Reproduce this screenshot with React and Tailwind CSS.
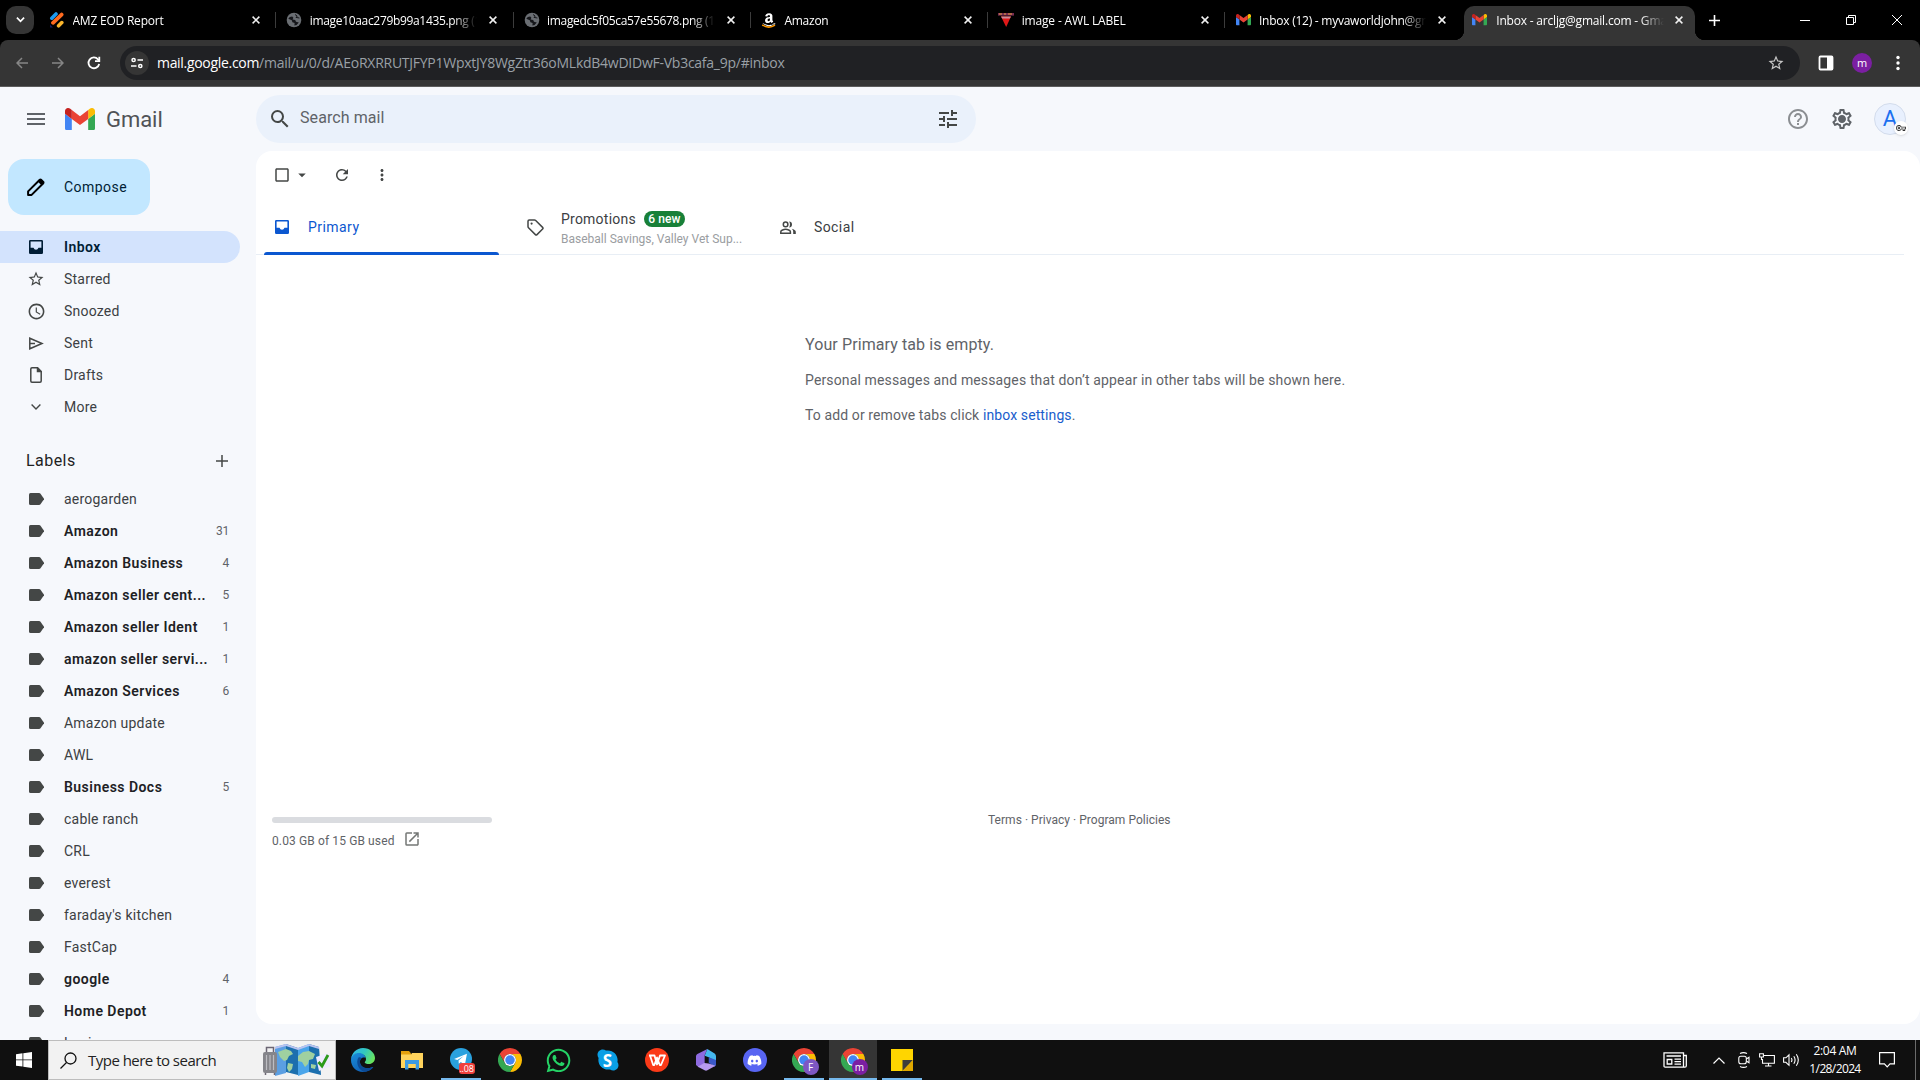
import React from "react";
import {
  MdMenu, MdSearch, MdTune, MdHelpOutline, MdOutlineSettings, MdArrowDropDown, MdRefresh,
  MdMoreVert, MdStarBorder, MdSchedule, MdOpenInNew, MdOutlineVpnKey, MdCheckBoxOutlineBlank,
} from "react-icons/md";
import { FaAmazon, FaWhatsapp, FaSkype, FaDiscord } from "react-icons/fa";

const gmailFont = "font-[Roboto,sans-serif]";
const uiFont = "font-['Open_Sans','Noto_Sans',sans-serif]";

/* ---------- favicons and logos ---------- */

function GmailLogo({ className }) {
  return (
    <svg viewBox="52 42 88 66" className={className}>
      <path fill="#4285f4" d="M58 108h14V74L52 59v43c0 3.32 2.69 6 6 6" />
      <path fill="#34a853" d="M120 108h14c3.32 0 6-2.69 6-6V59l-20 15" />
      <path fill="#fbbc04" d="M120 48v26l20-15v-8c0-7.42-8.47-11.65-14.4-7.2" />
      <path fill="#ea4335" d="M72 74V48l24 18 24-18v26L96 92" />
      <path fill="#c5221f" d="M52 51v8l20 15V48l-5.6-4.2c-5.94-4.45-14.4-.22-14.4 7.2" />
    </svg>
  );
}

function StripesIcon() {
  return (
    <svg viewBox="0 0 16 16" className="size-4" strokeLinecap="round" strokeWidth="3.6" fill="none">
      <path d="M1 12.5v3h3z" fill="#141a5e" />
      <path d="M2.8 6.2 7 2" stroke="#1d9bf0" />
      <path d="M4 10.8 12.6 2.6" stroke="#ff6a1f" strokeWidth="3.8" />
      <path d="M9.6 13.8 12.8 10.6" stroke="#fbb62c" />
    </svg>
  );
}

function GlobeIcon() {
  return (
    <svg viewBox="0 0 16 16" className="size-4">
      <circle cx="8" cy="8" r="7.300" fill="#6a6e73" />
      <path d="M2.300 6.800 3.800 5l2.400-.4 1.200 1.200-.8 1.600 2.600.6.800 1.800 2.800.6-2.200 2.600-2.200.4.2-2.400-2.200-.8-.6-2z" fill="#15161a" />
      <path d="M9 2.500l2.200 1.600-1.200 1.300 3.400.6" stroke="#15161a" strokeWidth="1" fill="none" />
    </svg>
  );
}

function AmazonIcon() {
  return (
    <svg viewBox="0 0 448 512" className="size-[17px]">
      <FaAmazon size={448} color="#fff" y="10" />
      <path d="M20 385c120 85 270 85 385 10" stroke="#f90" strokeWidth="48" fill="none" />
    </svg>
  );
}

function AwlIcon() {
  return (
    <svg viewBox="0 0 16 16" className="size-4">
      <rect x="0" y="1" width="16" height="2.6" fill="#7a2d52" />
      <path d="M1 2h3M6 2h2M10 2h4" stroke="#e8a23c" strokeWidth="1" />
      <path d="M3 4.500h10L8.200 15z" fill="#e01818" />
      <path d="M3 4.500h10l-1.200 2H4.200z" fill="#c98b9a" />
    </svg>
  );
}

/* ---------- browser chrome ---------- */

const tabs = [
  { icon: <StripesIcon />, title: "AMZ EOD Report", track: "tracking-[-0.22px]" },
  { icon: <GlobeIcon />, title: "image10aac279b99a1435.png (1920×1080)", track: "tracking-[-0.33px]" },
  { icon: <GlobeIcon />, title: "imagedc5f05ca57e55678.png (1920×1080)", track: "tracking-[-0.33px]" },
  { icon: <AmazonIcon />, title: "Amazon", track: "tracking-[-0.25px]" },
  { icon: <AwlIcon />, title: "image - AWL LABEL", track: "tracking-[-0.16px]" },
  { icon: <GmailLogo className="w-[15px]" />, title: "Inbox (12) - myvaworldjohn@gmail.com", track: "tracking-[-0.25px]" },
];

function CloseX() {
  return (
    <svg viewBox="0 0 8 8" className="size-2 shrink-0" stroke="#f1f1f1" strokeWidth="1.500">
      <path d="M.6.6l6.800 6.800M7.400.6.6 7.400" />
    </svg>
  );
}

function TabTitle({ title, track }) {
  return (
    <span className={`ml-[7.500px] w-[167.500px] shrink-0 overflow-hidden whitespace-nowrap pt-[2px] text-[12px] text-white [mask-image:linear-gradient(to_right,#000_86%,transparent)] ${track}`}>
      {title}
    </span>
  );
}

function TabStrip() {
  return (
    <div className="flex h-10 bg-black">
      <div className="ml-[6px] mt-[6px] flex h-7 w-7 items-center justify-center rounded-[10px] bg-[#353535]">
        <svg viewBox="0 0 10 6" className="w-[9px]" fill="none" stroke="#fff" strokeWidth="1.900"><path d="M1 .8l4 4 4-4" /></svg>
      </div>
      <div className="ml-1 flex">
        {tabs.map((t, i) => (
          <div key={t.title} className="flex h-10 w-[237.3px] items-center">
            <span className={`h-4 w-px ${i ? "bg-[#3c3c3c]" : "bg-transparent"}`} />
            <span className="ml-[10px] flex w-4 shrink-0 justify-center">{t.icon}</span>
            <TabTitle title={t.title} track={t.track} />
            <span className="ml-[12px]"><CloseX /></span>
          </div>
        ))}
      </div>
      <div className="relative ml-[2px] mt-[6px] flex h-[34px] w-[231px] items-center rounded-t-[10px] bg-[#353535] pb-[6px] pl-2">
        <span className="absolute -left-[10px] bottom-0 size-[10px] bg-[radial-gradient(circle_at_0_0,#000_10px,#353535_10.500px)]" />
        <span className="absolute -right-[10px] bottom-0 size-[10px] bg-[radial-gradient(circle_at_100%_0,#000_10px,#353535_10.500px)]" />
        <GmailLogo className="mr-[2px] w-[15px] shrink-0" />
        <TabTitle title="Inbox - arcljg@gmail.com - Gmail" track="tracking-[-0.2px]" />
        <span className="ml-[11px]"><CloseX /></span>
      </div>
      <svg viewBox="0 0 11 11" className="ml-[14px] mt-[15px] size-[11px]" stroke="#fff" strokeWidth="1.600"><path d="M5.500 0v11M0 5.500h11" /></svg>
      <div className="ml-auto mr-[18px] flex h-10 items-center gap-9">
        <svg viewBox="0 0 10 10" className="size-[10px]" stroke="#fff" fill="none"><path d="M0 5.500h10" /></svg>
        <svg viewBox="0 0 10 10" className="size-[10px]" stroke="#fff" fill="none"><path d="M.5 2.500h7v7h-7zM2.500 2.500v-2h7v7h-2" /></svg>
        <svg viewBox="0 0 10 10" className="size-[10px]" stroke="#fff" fill="none"><path d="M0 0l10 10M10 0 0 10" /></svg>
      </div>
    </div>
  );
}

function Toolbar() {
  return (
    <div className="bg-black">
      <div className="flex h-[47px] items-center rounded-t-lg border-b border-[#5c5c5c] bg-[#353535] pl-4">
        <svg viewBox="0 0 12 12" className="size-3" stroke="#868686" strokeWidth="1.500" fill="none"><path d="M12 6H1M6 1 1 6l5 5" /></svg>
        <svg viewBox="0 0 12 12" className="ml-6 size-3" stroke="#868686" strokeWidth="1.500" fill="none"><path d="M0 6h11M6 1l5 5-5 5" /></svg>
        <svg viewBox="0 0 14 14" className="ml-[23px] size-[14px]" stroke="#fff" strokeWidth="1.800" fill="none"><path d="M12.200 8A5.400 5.400 0 1 1 11 3.300L12.300 4.600" /><path d="M12.300.8v4.400H8" /></svg>
        <div className="ml-[19px] flex h-[34px] w-[1680px] items-center rounded-full bg-[#202124] pl-[5px] pr-[15px]">
          <span className="flex size-6 shrink-0 items-center justify-center rounded-full bg-[#353535]">
            <svg viewBox="0 0 12 12" className="size-3" stroke="#fff" strokeWidth="1.500" fill="none"><circle cx="2.600" cy="3" r="1.600" /><path d="M6.500 3H12M0 9h5.500" /><circle cx="9.300" cy="9" r="1.600" /></svg>
          </span>
          <span className="ml-2 whitespace-nowrap text-[14px] leading-5 tracking-[-0.31px] text-white">mail.google.com</span>
          <span className="whitespace-nowrap text-[14px] leading-5 tracking-[-0.255px] text-[#9aa0a6]">/mail/u/0/d/AEoRXRRUTJFYP1WpxtJY8WgZtr36oMLkdB4wDIDwF-Vb3cafa_9p/#inbox</span>
          <MdStarBorder className="ml-auto size-[18px] text-[#c7c7c7]" />
        </div>
        <svg viewBox="0 0 16 16" className="ml-[18px] size-4"><rect x="1.500" y="1.500" width="13" height="13" rx="1" fill="none" stroke="#fff" strokeWidth="1.800" /><path d="M9 1h5.500v14H9z" fill="#fff" /></svg>
        <span className="ml-[18px] flex size-5 items-center justify-center rounded-full bg-[#7b1fa2] pb-px text-[11px] leading-none text-white">m</span>
        <svg viewBox="0 0 4 16" className="ml-6 h-4 w-1" fill="#fff"><circle cx="2" cy="2.500" r="1.700" /><circle cx="2" cy="8" r="1.700" /><circle cx="2" cy="13.500" r="1.700" /></svg>
      </div>
    </div>
  );
}

/* ---------- Gmail ---------- */

function InboxIcon() {
  return <svg viewBox="0 0 14 14" className="size-[14px]" fill="currentColor" fillRule="evenodd"><path d="M1.300 0h11.400Q14 0 14 1.300v11.400q0 1.300-1.300 1.300H1.300Q0 14 0 12.700V1.300Q0 0 1.300 0zM1.600 1.600v6.200H4.500Q5.200 9.800 7 9.800t2.500-2h2.900V1.600z" /></svg>;
}
function SendIcon() {
  return <svg viewBox="0 0 15 13" className="w-[15px]" fill="none" stroke="#444746" strokeWidth="1.500"><path d="M.8 1.200 13 6.500.8 11.800zM1 6.500h5" /></svg>;
}
function DraftIcon() {
  return <svg viewBox="0 0 12 16" className="w-3" fill="none" stroke="#444746" strokeWidth="1.500"><path d="M.8 2q0-1.200 1.200-1.200h5.500l3.700 3.700V14q0 1.200-1.200 1.200H2q-1.200 0-1.200-1.200z" /><path d="M7.500 1v3.500h3.500z" fill="#444746" /></svg>;
}
function LabelIcon() {
  return <svg viewBox="0 0 15 12" className="w-[15px]" fill="#444746"><path d="M1.500 0H10q1 0 1.500.7L15.200 6l-3.700 5.300q-.5.700-1.500.7H1.500Q0 12 0 10.500v-9Q0 0 1.500 0z" /></svg>;
}
function PencilIcon() {
  return (
    <svg viewBox="0 0 18 18" className="size-[18px]" fill="none" stroke="#000" strokeWidth="2">
      <path d="M1.100 13.400 12.800 1.700l3.500 3.500L4.600 16.900H1.100z" strokeLinejoin="round" />
      <path d="M12.700.9q1-1 2 0L17 3.300q1 1 0 2L14.700 7.500 10.500 3.200z" fill="#000" stroke="none" />
    </svg>
  );
}
function PeopleIcon() {
  return (
    <svg viewBox="0 0 16 13" className="w-4" fill="none" stroke="#444746" strokeWidth="1.500">
      <circle cx="5.600" cy="3.400" r="2.300" />
      <path d="M.8 12.200v-1.400c0-1.600 3-2.500 4.800-2.500s4.800.9 4.800 2.500v1.400z" />
      <path d="M9 .4a3 3 0 0 1 0 6c1.300-1.500 1.300-4.500 0-6zM11.800 7.800c2 .5 4 1.500 4 3V13h-2.600v-2.200c0-1.200-.5-2.200-1.400-3z" fill="#444746" stroke="none" />
    </svg>
  );
}
function GearIcon() {
  return (
    <svg viewBox="0 0 24 24" className="ml-5 size-6 text-[#5f6368]">
      <MdOutlineSettings size={24} />
      <circle cx="12" cy="12" r="3.200" fill="currentColor" />
    </svg>
  );
}

const folders = [
  { name: "Starred", icon: <MdStarBorder className="size-[18px]" /> },
  { name: "Snoozed", icon: <MdSchedule className="size-[19px]" /> },
  { name: "Sent", icon: <SendIcon /> },
  { name: "Drafts", icon: <DraftIcon /> },
  { name: "More", icon: <svg viewBox="0 0 10 6" className="w-[10px]" fill="none" stroke="#444746" strokeWidth="1.400"><path d="M.6.6 5 5 9.400.6" /></svg> },
];

const labels = [
  ["aerogarden"], ["Amazon", 31], ["Amazon Business", 4], ["Amazon seller cent...", 5],
  ["Amazon seller Ident", 1], ["amazon seller servi...", 1], ["Amazon Services", 6],
  ["Amazon update"], ["AWL"], ["Business Docs", 5], ["cable ranch"], ["CRL"], ["everest"],
  ["faraday's kitchen"], ["FastCap"], ["google", 4], ["Home Depot", 1], ["Login"],
];

function SideRow({ icon, name, count, bold, active }) {
  return (
    <div className={`flex h-8 w-60 shrink-0 items-center rounded-r-full pr-[11px] ${active ? "bg-[#d3e3fd] text-[#001d35]" : "text-[#202124]"}`}>
      <span className={`flex w-[72px] shrink-0 justify-center ${active ? "" : "text-[#444746]"}`}>{icon}</span>
      <span className={`-ml-2 whitespace-nowrap text-[14px] leading-5 ${bold ? "font-semibold tracking-[0.46px]" : "tracking-[0.22px] text-[#3c4043]"}`}>{name}</span>
      {count && <span className="ml-auto text-[12px] tracking-[-0.3px] text-[#5f6368]">{count}</span>}
    </div>
  );
}

function Sidebar() {
  return (
    <aside className="flex w-64 shrink-0 flex-col overflow-hidden">
      <div className="flex h-16 shrink-0 items-center pl-6 text-[#5f6368]">
        <MdMenu className="size-6" />
        <GmailLogo className="ml-[17px] w-[30px]" />
        <span className="ml-[11px] text-[22px] tracking-[-0.05px] text-[#505357]">Gmail</span>
      </div>
      <button className="ml-2 mt-2 flex h-14 w-[142px] shrink-0 items-center rounded-2xl bg-[#c2e7ff] pl-[19px] text-[#001d35]">
        <PencilIcon />
        <span className="ml-[19px] text-[14px] font-[450] tracking-[0.45px]">Compose</span>
      </button>
      <nav className="mt-4 flex flex-col">
        <SideRow active bold name="Inbox" icon={<InboxIcon />} />
        {folders.map((f) => <SideRow key={f.name} {...f} />)}
      </nav>
      <div className="mt-[22px] flex h-[32px] w-[230px] shrink-0 items-center justify-between pl-[26px] text-[#1f1f1f]">
        <span className="text-[16px] tracking-[0.45px]">Labels</span>
        <svg viewBox="0 0 12 12" className="mr-[2px] size-3" stroke="#444746" strokeWidth="1.500"><path d="M6 0v12M0 6h12" /></svg>
      </div>
      <div className="mt-[6px] flex flex-col">
        {labels.map(([name, count]) => <SideRow key={name} name={name} count={count} bold={!!count} icon={<LabelIcon />} />)}
      </div>
    </aside>
  );
}

function TopBar() {
  return (
    <header className="flex h-16 shrink-0 items-center pr-[14px]">
      <div className="flex h-12 w-[720px] items-center rounded-full bg-[#eaf1fb] pl-3">
        <MdSearch className="size-6 text-[#444746]" />
        <span className="ml-2 pb-[2px] text-[16px] tracking-[0.08px] text-[#5f6368]">Search mail</span>
        <MdTune className="ml-auto mr-4 size-6 text-[#444746]" />
      </div>
      <MdHelpOutline className="ml-auto size-6 text-[#8b8e92]" />
      <GearIcon />
      <div className="relative ml-5 flex size-8 items-center justify-center rounded-full border border-[#d3dcec] bg-[#e8f0fe]">
        <span className="text-[22px] leading-none text-[#1a6ff0]">A</span>
        <span className="absolute -bottom-px -right-[3px] flex size-[14px] items-center justify-center rounded-full bg-white shadow">
          <MdOutlineVpnKey className="size-[10px] text-[#333]" />
        </span>
      </div>
    </header>
  );
}

function InboxPanel() {
  return (
    <main className="flex h-[873px] shrink-0 flex-col rounded-2xl bg-white">
      <div className="flex h-12 shrink-0 items-center pl-[17px] text-[#444746]">
        <MdCheckBoxOutlineBlank className="size-[18px]" />
        <MdArrowDropDown className="ml-[2px] size-[18px]" />
        <MdRefresh className="ml-[22px] size-[18px]" />
        <MdMoreVert className="ml-[22px] size-[18px]" />
      </div>
      <div className="mr-4 flex h-14 shrink-0 border-b border-[#e8eef5] text-[#3c4043]">
        <div className="relative ml-2 flex h-14 w-[235px] items-center pl-[11px] text-[#0b57d0]">
          <InboxIcon />
          <span className="ml-[19px] text-[14px] font-[450] tracking-[0.45px]">Primary</span>
          <span className="absolute inset-x-0 bottom-0 h-[3px] rounded-t-sm bg-[#0b57d0]" />
        </div>
        <div className="ml-[18px] flex h-14 w-[252px] items-center pl-[10px]">
          <svg viewBox="0 0 17 17" className="size-[17px] shrink-0" fill="none" stroke="#444746" strokeWidth="1.500">
            <path d="M1 2.200Q1 1 2.200 1h5.300q.7 0 1.200.5l6.900 6.900q.8.800 0 1.600l-5.600 5.600q-.8.800-1.600 0L1.500 8.700Q1 8.200 1 7.500z" /><circle cx="4.600" cy="4.600" r="1.100" fill="#444746" stroke="none" />
          </svg>
          <div className="ml-[17px] flex flex-col pt-1">
            <div className="flex items-center">
              <span className="text-[14px] font-[450] leading-5 tracking-[0.23px]">Promotions</span>
              <span className="ml-2 flex h-4 w-[41px] items-center justify-center rounded-lg bg-[#188038] text-[12px] font-medium leading-none tracking-[0.1px] text-white">6 new</span>
            </div>
            <span className="whitespace-nowrap text-[12px] leading-5 text-[#9a9da1]">Baseball Savings, Valley Vet Sup...</span>
          </div>
        </div>
        <div className="flex h-14 items-center pl-[11px]">
          <PeopleIcon />
          <span className="ml-[18px] text-[14px] font-[450] tracking-[0.4px]">Social</span>
        </div>
      </div>
      <div className="ml-[549px] mt-[78px] flex flex-col text-[#5f6368]">
        <p className="text-[16px] leading-6 tracking-[0.1px]">Your Primary tab is empty.</p>
        <p className="mt-[13px] text-[14px] leading-5 tracking-[0.14px]">Personal messages and messages that don’t appear in other tabs will be shown here.</p>
        <p className="mt-[15px] text-[14px] leading-5 tracking-[0.11px]">To add or remove tabs click <span className="text-[#1a5dcc]">inbox settings</span>.</p>
      </div>
      <footer className="mt-[387px] flex text-[12px] leading-[14px] text-[#5f6368]">
        <div className="ml-4 w-[220px]">
          <div className="mt-[5px] h-[6px] rounded-full bg-[#dadce0]" />
          <div className="mt-[7px] flex items-center">
            <span className="pt-1 tracking-[0.12px]">0.03 GB of 15 GB used</span>
            <MdOpenInNew className="ml-[8px] size-[18px] text-[#747775]" />
          </div>
        </div>
        <div className="ml-[496px] mt-[1px] tracking-[0.03px]">Terms · Privacy · Program Policies</div>
      </footer>
    </main>
  );
}

/* ---------- Windows taskbar ---------- */

function ChromeLogo({ className }) {
  return (
    <svg viewBox="0 0 48 48" className={className}>
      <path fill="#ea4335" d="M24 12h20.780A24 24 0 0 0 3.215 12L13.608 30A12 12 0 0 1 24 12" />
      <path fill="#fbbc04" d="M34.390 30 24 48A24 24 0 0 0 44.780 12H24A12 12 0 0 1 34.390 30" />
      <path fill="#34a853" d="M13.608 30 3.215 12A24 24 0 0 0 24 48l10.390-18A12 12 0 0 1 13.608 30" />
      <circle cx="24" cy="24" r="12" fill="#fff" />
      <circle cx="24" cy="24" r="9.500" fill="#4285f4" />
    </svg>
  );
}

function ProfileChrome({ letter, tint }) {
  return (
    <span className="relative block size-6">
      <ChromeLogo className="size-6" />
      <span className={`absolute -bottom-[3px] -right-[3px] flex size-4 items-center justify-center rounded-full text-[10px] leading-none text-white ${tint}`}>{letter}</span>
    </span>
  );
}

function EdgeLogo() {
  return (
    <svg viewBox="0 0 24 24" className="size-6">
      <defs>
        <linearGradient id="edgeTop" x1="0" y1="0.200" x2="1" y2="0.600"><stop offset="0" stopColor="#2fb5ea" /><stop offset=".5" stopColor="#32c8c0" /><stop offset="1" stopColor="#6be55a" /></linearGradient>
        <linearGradient id="edgeLeft" x1="0" y1="0" x2="0.600" y2="1"><stop offset="0" stopColor="#1b8fdb" /><stop offset="1" stopColor="#0f5fb5" /></linearGradient>
      </defs>
      <path fill="url(#edgeLeft)" d="M0 12C0 6.500 4.500 4.500 8 4.500c4 0 6.500 3 6.500 5.500-3-1.500-6 1-5.500 4.500.5 4 5 7 10.500 5.200 1.500-.5 2.500-1 2.800-.6C20.500 22 16.500 24 12 24 5 24 0 18.500 0 12z" />
      <path fill="#0c4a94" d="M7.500 9.500C4.500 14 7 22 13.500 23.900c4-.4 7-2.300 8.700-4.800.2-.4-1-.1-2.700.6-5.500 1.800-10-1.200-10.500-5.200-.2-2 .3-3.400 1.500-4.500-1-.8-2-1-3-.5z" />
      <path fill="url(#edgeTop)" d="M0 11.500C.5 5 5.500 0 12 0c7 0 12 5 12 10 0 3.500-2.800 6-6 6-2.500 0-4.300-.8-4.300-1.600 0-.7 1.300-1.200 1.300-3.200C15 7.500 11.500 5 8 5 4 5 .8 7.500 0 11.500z" />
    </svg>
  );
}

function ExplorerIcon() {
  return (
    <svg viewBox="0 0 22 19" className="w-[22px]">
      <path fill="#e5a00d" d="M0 0h8l2 2.500V5H0z" />
      <path fill="#ffd35c" d="M0 3.500h10L11 2h11v15H0z" />
      <path fill="#3b9be5" d="M4 9h14v9.500h-3.500V13h-7v5.500H4z" />
      <path fill="#ffd35c" d="M0 16h4v1H0zM7.500 13h7v4h-7z" />
    </svg>
  );
}

function TelegramIcon() {
  return (
    <span className="relative block size-6">
      <svg viewBox="0 0 24 24" className="ml-px size-[22px]"><circle cx="12" cy="12" r="12" fill="#2aa1de" /><path fill="#fff" d="M4.500 12 18.500 6.200 16.200 18.500 11.800 15.200 9.600 17.300 9.300 13.600 15 8.800 8 13z" /></svg>
      <span className="absolute -bottom-[2px] left-[10px] flex h-[11px] w-4 items-center justify-center rounded-[3px] bg-[#f0403c] text-[9px] leading-none tracking-tight text-white">..08</span>
    </span>
  );
}

function WpsIcon() {
  return (
    <svg viewBox="0 0 24 24" className="size-6">
      <circle cx="12" cy="12" r="12" fill="#fb3a18" />
      <path fill="none" stroke="#fff" strokeWidth="1.800" strokeLinejoin="round" d="M4 7.500h5.500L12 16.500 15 7.500h5L16 17h-1.200L12 9.500 9.300 17H8.200L5 7.500" />
    </svg>
  );
}

function M365Icon() {
  return (
    <svg viewBox="0 0 22 24" className="w-5">
      <path fill="#8e6be0" d="M1.500 5.500 12.500 0 9.500 7v9L3 20 0 17.500V8Q0 6.500 1.500 5.500z" />
      <path fill="#45b8ee" d="M12.500 0 20.500 5Q22 6 22 8v6l-8-5-4.500-1.500z" />
      <path fill="#3a58c8" d="M22 12v5q0 1.500-1.500 2.500L14 15V9z" />
      <path fill="#b79af0" d="M2 19.500 9 15.500l5 .5 7.500 2.500L12.500 23.500q-1.500.8-3 0z" />
    </svg>
  );
}

function SkypeTile() {
  return (
    <span className="relative flex size-6 items-center justify-center">
      <FaSkype className="size-6 text-[#0a9fe5]" />
      <span className="absolute flex size-[17px] items-center justify-center rounded-full bg-[#0a9fe5] text-[17px] font-bold leading-none text-white">S</span>
    </span>
  );
}

function StickyIcon() {
  return <svg viewBox="0 0 22 22" className="size-[22px]"><path fill="#ffd500" d="M0 0h22v22H0z" /><path fill="#3c3c3c" d="M11.500 11H22L11.500 22z" /><path fill="#e0a800" d="M22 11v11H11.500z" /></svg>;
}

const apps = [
  { id: "edge", icon: <EdgeLogo /> },
  { id: "explorer", icon: <ExplorerIcon /> },
  { id: "telegram", icon: <TelegramIcon />, open: true },
  { id: "chrome", icon: <ChromeLogo className="size-6" /> },
  { id: "whatsapp", icon: <FaWhatsapp className="size-[27px] text-[#25d366]" /> },
  { id: "skype", icon: <SkypeTile /> },
  { id: "wps", icon: <WpsIcon /> },
  { id: "m365", icon: <M365Icon /> },
  { id: "discord", icon: <span className="flex size-6 items-center justify-center rounded-full bg-[#5865f2]"><FaDiscord className="size-[15px] text-white" /></span> },
  { id: "chrome-f", icon: <ProfileChrome letter="F" tint="bg-[#7e57c2]" />, open: true },
  { id: "chrome-m", icon: <ProfileChrome letter="m" tint="bg-[#7b1fa2]" />, open: true, focused: true },
  { id: "sticky", icon: <StickyIcon />, open: true },
];

function TravelArt() {
  return (
    <svg viewBox="0 0 70 34" className="h-[34px] w-[70px]">
      <path fill="#5b9fe2" d="M13 4 24 1v29l-11 3z" />
      <path fill="#1c6fae" d="M24 1l12 4v27l-12-3z" />
      <path fill="#4aa5ea" d="M36 5 47 1v28l-11 4z" />
      <path fill="#1c6fae" d="M47 1l10 3 2 28-12-3z" />
      <path fill="#b9c3f0" d="M13 4 24 1l12 4L47 1l10 3v2L47 3 36 7 24 3 13 6z" />
      <path fill="#9fd0a0" d="M16 9l8-3 5 2 2 3-4 2-2 4-3 1-4-4zM26 20l5 1-1 5-3 3-2-4zM36 13l5-4 6-1 6 3-2 5-4 1-1 4-3 3-3-5-4-1zM49 21l5 1-1 4-4-1z" />
      <path fill="#85858a" d="M3 9h10q2 0 2 2v17q0 2-2 2H3q-2 0-2-2V11q0-2 2-2z" />
      <path fill="none" stroke="#bdbdc2" strokeWidth="1.200" d="M4.500 12v15M8 12v15M11.500 12v15" />
      <path fill="none" stroke="#6b6673" strokeWidth="1.500" d="M4.500 9V4.500h7V9M3.500 30v2M12.500 30v2" />
      <path fill="#efeaff" d="M54 14 66 10l3 13-12 5z" />
      <path fill="none" stroke="#2c9a1c" strokeWidth="2.800" d="M56.500 19l3.500 4 6-11" />
    </svg>
  );
}

function Taskbar() {
  return (
    <div className="flex h-10 bg-[#101010] text-white">
      <div className="flex w-12 items-center justify-center">
        <svg viewBox="0 0 16 16" className="size-4" fill="#fff"><path d="M0 2.200 6.500 1.300v6.200H0zM7.300 1.200 16 0v7.500H7.300zM0 8.300h6.500v6.300L0 13.700zM7.300 8.300H16V16l-8.700-1.200z" /></svg>
      </div>
      <div className="flex h-10 w-72 items-center border border-[#bdbdbd] bg-[#f2f2f2] pl-[11px] pr-[3px]">
        <svg viewBox="0 0 17 17" className="size-[17px]" fill="none" stroke="#111" strokeWidth="1.300"><circle cx="10.500" cy="6.500" r="5.500" /><path d="M6.500 10.500.5 16.500" /></svg>
        <span className="ml-[11px] text-[15px] tracking-[-0.52px] text-[#222]">Type here to search</span>
        <span className="ml-auto"><TravelArt /></span>
      </div>
      <div className="ml-[2px] flex">
        {apps.map((a) => (
          <div key={a.id} className="flex h-10 w-[49px] justify-center">
            <div className={`relative flex h-10 items-center justify-center ${a.focused ? "w-12 bg-[#353535]" : "w-10"}`}>
              {a.icon}
              {a.open && <span className="absolute inset-x-0 bottom-0 h-[2px] bg-[#76b9ed]" />}
            </div>
          </div>
        ))}
      </div>
      <div className="ml-auto flex items-center">
        <svg viewBox="0 0 24 16" className="w-6" fill="none" stroke="#fff" strokeWidth="1.300"><path d="M1 .8h19.500v14.400H2.200Q1 15.200 1 14zM20.500 3.500h2.800v10.200q0 1.500-1.400 1.500h-1.400M3.500 4h14.500M11.500 7.200h6.500M11.500 9.700h6.500M11.500 12.200h6.500M4.200 7.500h4.600v4.500H4.200z" /></svg>
        <svg viewBox="0 0 12 7" className="ml-[26px] w-3" fill="none" stroke="#fff" strokeWidth="1.200"><path d="M.5 6.500 6 1l5.500 5.500" /></svg>
        <svg viewBox="0 0 12 16" className="ml-[13px] w-3" fill="none" stroke="#fff" strokeWidth="1.100"><rect x=".8" y="4.300" width="7.500" height="7.500" rx="2" /><path d="M8.300 7l2.700-1.700v5.500L8.300 9M2 1.500Q5.500-.3 9 1.500M2 14.500q3.500 1.800 7 0" /></svg>
        <svg viewBox="0 0 16 14" className="ml-[9px] w-4" fill="none" stroke="#fff" strokeWidth="1.100"><path d="M5 2.500h10.400v7.800H3.500V6M9.500 10.300v2.700M6 13h6.500M.6.800h3.800V4H.6zM2.500 4v3" /></svg>
        <svg viewBox="0 0 17 14" className="ml-[8px] w-[17px]" fill="none" stroke="#fff" strokeWidth="1.100"><path d="M.6 4.800h2.300L6 1.800v10.500l-3.100-3H.6zM8.300 5q1.300 2 0 4M10.800 3.200q2.600 3.800 0 7.600M13.300 1.300q4 5.700 0 11.400" /></svg>
        <div className="ml-[8px] flex w-[54px] flex-col items-center whitespace-nowrap text-[12px] leading-[18px]">
          <span className="tracking-[-0.3px]">2:04 AM</span>
          <span className="tracking-[-0.62px]">1/28/2024</span>
        </div>
        <svg viewBox="0 0 16 16" className="ml-[17px] w-4" fill="none" stroke="#fff" strokeWidth="1.200"><path d="M.6.6h14.800v11.200H11L8.200 14.800 5.400 11.800H.6z" /></svg>
        <span className="ml-5 mr-1 h-10 w-px bg-[#6b6b6b]" />
      </div>
    </div>
  );
}

export default function App() {
  return (
    <div className={`flex h-[1080px] w-[1920px] flex-col overflow-hidden ${uiFont}`}>
      <TabStrip />
      <Toolbar />
      <div className={`flex h-[953px] bg-[#f6f8fc] ${gmailFont}`}>
        <Sidebar />
        <div className="flex flex-1 flex-col">
          <TopBar />
          <InboxPanel />
        </div>
      </div>
      <Taskbar />
    </div>
  );
}
